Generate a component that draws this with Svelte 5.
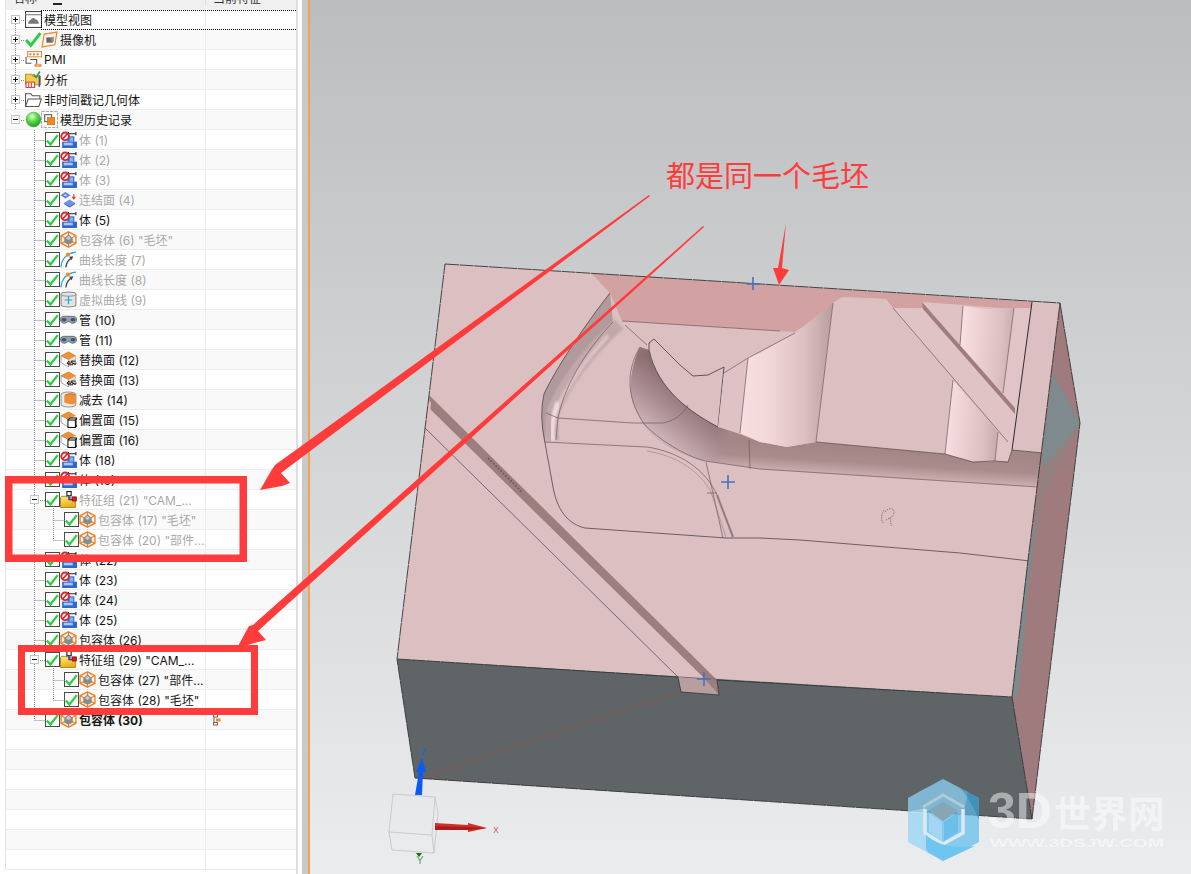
<script lang="ts">
    const body = "body";
    const wrap = "wrap";
    type Row = { icons?: string[]; text?: string; level?: number; check?: boolean; dim?: boolean; bold?: boolean; exp?: string; stamp?: boolean };

    const rows: Row[] = [
        { level: 0, exp: "+", icons: ["view"], text: "模型视图" },
        { level: 0, exp: "+", icons: ["tick", "camera"], text: "摄像机" },
        { level: 0, exp: "+", icons: ["pmi"], text: "PMI" },
        { level: 0, exp: "+", icons: ["analysis"], text: "分析" },
        { level: 0, exp: "+", icons: ["folder"], text: "非时间戳记几何体" },
        { level: 0, exp: "-", icons: ["ball", "history"], text: "模型历史记录" },
        { level: 1, check: true, dim: true, icons: [body], text: "体 (1)" },
        { level: 1, check: true, dim: true, icons: [body], text: "体 (2)" },
        { level: 1, check: true, dim: true, icons: [body], text: "体 (3)" },
        { level: 1, check: true, dim: true, icons: ["sew"], text: "连结面 (4)" },
        { level: 1, check: true, icons: [body], text: "体 (5)" },
        { level: 1, check: true, dim: true, icons: [wrap], text: '包容体 (6) "毛坯"' },
        { level: 1, check: true, dim: true, icons: ["curve"], text: "曲线长度 (7)" },
        { level: 1, check: true, dim: true, icons: ["curve"], text: "曲线长度 (8)" },
        { level: 1, check: true, dim: true, icons: ["virtual"], text: "虚拟曲线 (9)" },
        { level: 1, check: true, icons: ["tube"], text: "管 (10)" },
        { level: 1, check: true, icons: ["tube"], text: "管 (11)" },
        { level: 1, check: true, icons: ["replace"], text: "替换面 (12)" },
        { level: 1, check: true, icons: ["replace"], text: "替换面 (13)" },
        { level: 1, check: true, icons: ["subtract"], text: "减去 (14)" },
        { level: 1, check: true, icons: ["offset"], text: "偏置面 (15)" },
        { level: 1, check: true, icons: ["offset"], text: "偏置面 (16)" },
        { level: 1, check: true, icons: [body], text: "体 (18)" },
        { level: 1, check: true, icons: [body], text: "体 (19)" },
        { level: 1, exp: "-", check: true, dim: true, icons: ["group"], text: '特征组 (21) "CAM_...' },
        { level: 2, check: true, dim: true, icons: [wrap], text: '包容体 (17) "毛坯"' },
        { level: 2, check: true, dim: true, icons: [wrap], text: '包容体 (20) "部件...' },
        { level: 1, check: true, icons: [body], text: "体 (22)" },
        { level: 1, check: true, icons: [body], text: "体 (23)" },
        { level: 1, check: true, icons: [body], text: "体 (24)" },
        { level: 1, check: true, icons: [body], text: "体 (25)" },
        { level: 1, check: true, icons: [wrap], text: "包容体 (26)" },
        { level: 1, exp: "-", check: true, icons: ["group"], text: '特征组 (29) "CAM_...' },
        { level: 2, check: true, icons: [wrap], text: '包容体 (27) "部件...' },
        { level: 2, check: true, icons: [wrap], text: '包容体 (28) "毛坯"' },
        { level: 1, check: true, bold: true, icons: [wrap], text: "包容体 (30)", stamp: true },
        {}, {}, {}, {}, {}, {}, {},
    ];

    // dotted tree lines, one stub per row plus the long verticals
    const stubs = rows
        .map((row, i) => {
            const y = 20.5 + 20 * i;
            if (row.level === 0) return `M15 ${y}h4`;
            if (row.level === 2) return `M47.500 ${y}h11`;
            if (row.level === 1) return row.exp ? `M34 ${y}h5` : `M28.500 ${y}h11`;
            return "";
        })
        .join("");
    const guides = `M9.500 20v90M28.500 130v590M47.500 508v32M47.500 668v32${stubs}`;
</script>

<svg class="defs" width="0" height="0" aria-hidden="true">
    <defs>
        <symbol id="i-view" viewBox="0 0 16 16">
            <rect x="0.5" y="0.5" width="15" height="15" fill="#fff" stroke="#444" />
            <path d="M0 3.5h16" stroke="#777" />
            <path d="M3 12c0-3 2-3 3-4.500 1.500-1.500 3-1 4 .5 1.500 0 3 1.500 3 4z" fill="#777" />
        </symbol>
        <symbol id="i-tick" viewBox="0 0 16 16">
            <path d="M1 8.500l4.500 5L14.500 2" fill="none" stroke="#27cf3f" stroke-width="2.800" />
        </symbol>
        <symbol id="i-camera" viewBox="0 0 16 16">
            <path d="M3 3L15 1 13 13 1 15z" fill="#fff4ea" stroke="#ea8a35" stroke-width="1.200" />
            <rect x="5" y="6" width="6" height="5" fill="#666" />
            <path d="M9 7l3-2v5l-3-1z" fill="#888" />
        </symbol>
        <symbol id="i-pmi" viewBox="0 0 16 16">
            <rect x="2.500" y="0.500" width="13" height="5" fill="#fff" stroke="#e8872f" />
            <path d="M4 2h2v2H4zm3.500 0h2v2h-2zm3.500 0h2v2h-2z" fill="#e8872f" />
            <path d="M1 5.500v6h5M5 8h6v5" fill="none" stroke="#555" />
            <path d="M9 12h3v3H9zm3.500 0h3v3h-3z" fill="#ee9a45" />
        </symbol>
        <symbol id="i-analysis" viewBox="0 0 16 16">
            <path d="M0.500 3h6l1 2h7v8h-14z" fill="#f6cd45" stroke="#b8902c" />
            <path d="M8 3l2.500 3L14 0.500" fill="none" stroke="#2f9a3a" stroke-width="1.600" />
            <path d="M13.500 4v11" stroke="#3a54b5" stroke-width="1.400" />
            <rect x="1" y="10.500" width="8" height="5" fill="#fff" stroke="#d8433b" />
            <path d="M3.500 11v4M6 11v4" stroke="#d8433b" />
        </symbol>
        <symbol id="i-folder" viewBox="0 0 16 16">
            <path d="M0.500 14.500v-12h5l1.500 2h7v3" fill="#fff" stroke="#555" />
            <path d="M0.500 14.500L3 7.500h12.500L13 14.500z" fill="#fff" stroke="#555" />
        </symbol>
        <radialGradient id="ball" cx="0.4" cy="0.3" r="0.75">
            <stop offset="0" stop-color="#dcffd2" />
            <stop offset="0.45" stop-color="#58dc48" />
            <stop offset="1" stop-color="#179a1c" />
        </radialGradient>
        <symbol id="i-ball" viewBox="0 0 16 16">
            <circle cx="8" cy="8" r="7" fill="url(#ball)" stroke="#5e9e58" stroke-width="0.500" />
        </symbol>
        <symbol id="i-history" viewBox="0 0 16 16">
            <rect x="0.500" y="0.500" width="15" height="15" fill="#fff" stroke="#aaa" stroke-dasharray="3 1" />
            <rect x="3.500" y="3.500" width="6.500" height="6.500" fill="#fff" stroke="#555" />
            <rect x="6" y="6" width="7" height="7" fill="#ee8a20" stroke="#b9651a" stroke-width="0.500" />
        </symbol>
        <symbol id="i-body" viewBox="0 0 16 16">
            <path d="M8 2.500h7M8 1v3M15 1v3" stroke="#222" fill="none" />
            <path d="M7 5h6.500v5H7z" fill="#2f66d4" />
            <path d="M9 6h3.500v4H9z" fill="#86b4f2" />
            <path d="M2 10h14v6H2z" fill="#2f66d4" />
            <path d="M3.500 11h8.500v2.500H3.500z" fill="#a8c8f2" />
            <circle cx="4.800" cy="5" r="3.600" fill="#fff" stroke="#d9262a" stroke-width="1.800" />
            <path d="M2.500 7.500L7 2.500" stroke="#d9262a" stroke-width="1.500" />
        </symbol>
        <symbol id="i-sew" viewBox="0 0 16 16">
            <path d="M0.500 4L5 1l5 3-5 3z" fill="#5d80d8" />
            <path d="M3 4l2-1 2 1-2 1z" fill="#d8e3f8" />
            <path d="M4 11l5-3 5 3-5 3z" fill="#6f93e4" />
            <path d="M4 11v1.500l5 3 5-3V11l-5 3z" fill="#3a62bd" />
            <path d="M13 3v4M11.500 5.500L13 7.500l1.500-2" fill="none" stroke="#d8492f" stroke-width="1.100" />
        </symbol>
        <symbol id="i-wrap" viewBox="0 0 16 16">
            <path d="M8 0.800L15 4.500V11.500L8 15.200 1 11.500V4.500z" fill="#fdf1e4" stroke="#e8852a" stroke-width="1.300" />
            <path d="M1 4.500L8 8l7-3.500M8 8v7M1 11.500L8 8l7 3.500M8 1v7" fill="none" stroke="#e8852a" stroke-width="1" />
            <path d="M4 11V6.800L8 3l4 3.800V11L8 13z" fill="#8b8b8b" />
            <path d="M5.500 6.800L8 4.500l2.500 2.300L8 8.500z" fill="#c9c9c9" />
        </symbol>
        <symbol id="i-curve" viewBox="0 0 16 16">
            <path d="M0.800 15.500C1.500 8 6 2 15 1" fill="none" stroke="#2aa6d6" stroke-width="1.100" />
            <path d="M5.500 15.500C6 11 8 8 11 6.500" fill="none" stroke="#444" stroke-width="1.200" />
            <path d="M8.500 5.500l4-.5-1.500 3.800z" fill="#444" />
            <circle cx="7.500" cy="3.500" r="2" fill="#ee8a2a" />
        </symbol>
        <symbol id="i-virtual" viewBox="0 0 16 16">
            <path d="M1 3c0-2.800 14-2.800 14 0v10c0 2.800-14 2.800-14 0z" fill="#e4e4e4" stroke="#888" />
            <path d="M1 3c0 2.500 14 2.500 14 0" fill="none" stroke="#999" />
            <path d="M8 4.500v8M4.500 8.500h7" stroke="#1aa8d8" stroke-width="1.100" />
        </symbol>
        <symbol id="i-tube" viewBox="0 0 16 16">
            <path d="M0.500 8c0-3 2.500-3 4-3h7c1.500 0 4 0 4 3s-2 3.500-4 3.500c-1.500 0-2-1.500-3.500-1.500s-2 1.500-3.500 1.500c-2 0-4-.5-4-3.500z" fill="#9a9fa5" stroke="#555" stroke-width="0.700" />
            <ellipse cx="3.800" cy="8.200" rx="2.400" ry="1.700" fill="#2d5a8e" />
            <ellipse cx="12.200" cy="8.200" rx="2.400" ry="1.700" fill="#2d5a8e" />
        </symbol>
        <symbol id="i-replace" viewBox="0 0 16 16">
            <path d="M1 4.500L8 0.800l6.500 3.700L8 8z" fill="#f09030" stroke="#c8701e" stroke-width="0.500" />
            <path d="M1 4.500V11l7 4V8z" fill="#fafafa" stroke="#888" stroke-width="0.700" />
            <path d="M14.500 4.500V8L8 11V8z" fill="#f6dcc2" stroke="#999" stroke-width="0.500" />
            <path d="M7 11.500h3.500V10l3 2.500H15M15 9.500l-4.500 0M15.500 11.500h-3.500v1.500h-3.500l-2-1.500 2-2v1.500" fill="#fff" stroke="#111" stroke-width="0.900" />
        </symbol>
        <symbol id="i-subtract" viewBox="0 0 16 16">
            <path d="M1 4c0-4 14-4 14 0v8c0 4-14 4-14 0z" fill="#e9e9e9" stroke="#999" />
            <path d="M4 5c0-3 10-3.500 11-1v7c-2 2-6 2-11-.5z" fill="#ee8f3a" />
            <path d="M5 4c2-2 8-2 9 0" fill="none" stroke="#c46e22" />
        </symbol>
        <symbol id="i-offset" viewBox="0 0 16 16">
            <path d="M1 4.500L8 0.800l6.500 3.700L8 8z" fill="#f09030" stroke="#c8701e" stroke-width="0.500" />
            <path d="M1 4.500V11l7 4V8z" fill="#f8f8f8" stroke="#888" stroke-width="0.700" />
            <path d="M14.500 4.500V7L8 10V8z" fill="#f6dcc2" />
            <path d="M7.500 8.500l2-2h6.500v7l-1.500 2M14.500 8.500l1.500-2" fill="#fff" stroke="#111" />
            <rect x="7.500" y="8.500" width="7" height="7" fill="#fff" stroke="#111" />
        </symbol>
        <linearGradient id="fold" x1="0" y1="0" x2="0.300" y2="1">
            <stop offset="0" stop-color="#fff07a" />
            <stop offset="1" stop-color="#f0ae10" />
        </linearGradient>
        <symbol id="i-group" viewBox="0 0 16 16">
            <path d="M0.500 15.500V6.500l1-1.500h5l1 1h7v9.500z" fill="url(#fold)" stroke="#8a6a12" stroke-width="0.700" />
            <rect x="6.500" y="0.500" width="4" height="4" fill="#fff" stroke="#111" />
            <path d="M8.500 4.500v3.500h4" fill="none" stroke="#1a35e0" stroke-width="1.300" />
            <rect x="11.500" y="5.500" width="4" height="4" fill="#e8101a" stroke="#711" stroke-width="0.600" />
        </symbol>
    </defs>
</svg>

<div class="page">
    <aside class="panel">
        <header class="head">
            <span class="h1">名称<i class="sort"></i></span>
            <span class="h2">当前特征</span>
        </header>
        <div class="tree">
            <svg class="guides" width="291" height="864" aria-hidden="true">
                <path d={guides} fill="none" stroke="#8d8d8d" stroke-dasharray="1 1" />
            </svg>
            {#each rows as row, i}
                <div class="row" class:alt={i % 2 === 1}>
                    <div class="name lv{row.level ?? 0}" class:dim={row.dim} class:bold={row.bold} class:grouped={row.exp && row.level === 1}>
                        {#if row.exp}
                            <span class="exp">{#if row.exp === "+"}<b class="v"></b>{/if}</span>
                        {/if}
                        {#if row.check}
                            <span class="box"><svg viewBox="0 0 16 16" width="14" height="14"><use href="#i-tick" /></svg></span>
                        {/if}
                        {#each row.icons ?? [] as icon}
                            <svg class="ico" viewBox="0 0 16 16" width="17" height="17"><use href="#i-{icon}" /></svg>
                        {/each}
                        {#if row.text}<span class="label">{row.text}</span>{/if}
                    </div>
                    <div class="cur">
                        {#if row.stamp}
                            <svg viewBox="0 0 8 12" width="8" height="12"><rect x="0.500" y="0.500" width="4" height="2.500" fill="#fff" stroke="#666" /><rect x="3" y="4.500" width="4.500" height="3" fill="#ee8a20" /><rect x="0.500" y="8.500" width="4" height="2.500" fill="#fff" stroke="#666" /><path d="M1 3v6" stroke="#666" /></svg>
                        {/if}
                    </div>
                </div>
            {/each}
            <div class="focus"></div>
        </div>
    </aside>
    <div class="sash"></div>

    <main class="view">
        <svg class="model" viewBox="310 0 881 874" width="881" height="874">
            <defs>
                <linearGradient id="cyl" x1="0" y1="0" x2="1" y2="0">
                    <stop offset="0" stop-color="#f8dfe0" />
                    <stop offset="0.3" stop-color="#f3d8d9" />
                    <stop offset="0.7" stop-color="#dcbfc0" />
                    <stop offset="1" stop-color="#b99c9d" />
                </linearGradient>
                <linearGradient id="cyl2" x1="0" y1="0" x2="1" y2="0.100">
                    <stop offset="0" stop-color="#fbe2e3" />
                    <stop offset="0.35" stop-color="#efd3d4" />
                    <stop offset="0.8" stop-color="#dcbfc0" />
                    <stop offset="1" stop-color="#cbaeaf" />
                </linearGradient>
                <linearGradient id="trough" gradientUnits="userSpaceOnUse" x1="800" y1="446" x2="798" y2="478">
                    <stop offset="0" stop-color="#a58687" />
                    <stop offset="0.4" stop-color="#aa8c8d" />
                    <stop offset="1" stop-color="#dbbfc0" />
                </linearGradient>
                <linearGradient id="arc" gradientUnits="userSpaceOnUse" x1="692" y1="392" x2="648" y2="446">
                    <stop offset="0" stop-color="#8a6b6c" />
                    <stop offset="0.5" stop-color="#b0949a" />
                    <stop offset="1" stop-color="#e2c8c9" />
                </linearGradient>
                <filter id="soft"><feGaussianBlur stdDeviation="0.900" /></filter>
                <filter id="wide" x="-20%" y="-20%" width="140%" height="140%"><feGaussianBlur stdDeviation="5" /></filter>
                <clipPath id="front"><path d="M397 659L1012 697 1032 819 415 778z" /></clipPath>
                <clipPath id="troughClip"><path d="M649 350C653 378 680 405 718 427L740 434 760 442 787 447 815 442 945 454 973 462 1008 461 1012 450 1043 453 1038 487 760 469 700 460C670 450 640 435 631 395 630 375 634 360 640 347z" /></clipPath>
            </defs>

            <!-- top face and far wall -->
            <path d="M445 264L1060 303 1012 697 397 659z" fill="#dcbfc0" />
            <path d="M591 273L1032 302V309H1013L963 305 923 308 893 308 886 299 842 297 833 303 810 322 795 332 780 331 622 321 610 293z" fill="#d2a1a1" />

            <!-- pocket walls -->
            <path d="M610 293C585 325 556 368 544 394Q539 415 545 443L548 410C566 374 592 340 613 322z" fill="#b19a9b" />
            <path d="M619 324C590 350 565 382 553 412Q550 428 553 441" fill="none" stroke="#c2a8a9" stroke-width="13" filter="url(#soft)" />
            <path d="M608 336C588 357 568 385 556 410" fill="none" stroke="#dcc3c4" stroke-width="4" filter="url(#soft)" />
            <path d="M558 402Q550 425 553 441" fill="none" stroke="#f1dcdd" stroke-width="5" filter="url(#soft)" />

            <!-- trough below the blocks -->
            <path d="M649 350C653 378 680 405 718 427L740 434 760 442 787 447 815 442 945 454 973 462 1008 461 1012 450 1043 453 1038 487 760 469 700 460C670 450 640 435 631 395 630 375 634 360 640 347z" fill="url(#trough)" />
            <g clip-path="url(#troughClip)">
                <path d="M655 345L725 425 715 470 690 470 620 420 620 350z" fill="url(#arc)" filter="url(#wide)" />
            </g>

            <!-- blocks -->
            <path d="M649 343L654 339 680 365 693 376 708 375 724 367 718 427C690 412 658 390 649 350z" fill="#dcbfc0" stroke="#3f3a3b" stroke-width="0.800" />
            <path d="M724 373L748 358 740 433 718 427z" fill="#dfc2c3" />
            <path d="M748 357L760 353 795 333 833 303 816 442 787 447 760 442 740 433z" fill="url(#cyl)" />
            <path d="M833 303L842 297 886 299 893 308 953 380 945 454 816 442z" fill="#dcbfc0" />
            <path d="M963 306L987 309 1014 308 1003 393 960 345z" fill="url(#cyl2)" />
            <path d="M953 380L998 432 995 461 973 462 945 454z" fill="url(#cyl2)" />
            <path d="M1014 308H1031L1012 450 1008 462 995 461 998 432 1008 442 1015 413 1003 393z" fill="#e1c5c6" />
            <path d="M893 308L923 309 1015 414 1008 442z" fill="#e0c3c4" />
            <path d="M922 302L963 305 960 345z" fill="#dfc2c3" />
            <path d="M922 302L1015 408V414L923 309z" fill="#a07c7e" />

            <!-- slot running to the front edge -->
            <path d="M429 395L717 680 719 695 702 676 430 409z" fill="#9d7e7f" />
            <path d="M428 401L431 402 429 430 425 428z" fill="#e7b8b9" />
            <path d="M488 458L522 492" stroke="#7a5a5b" stroke-width="2" stroke-dasharray="2 1.500" />

            <!-- thin edges -->
            <path d="M717 495L733 537" stroke="#b39899" stroke-width="2.500" />
            <g fill="none" stroke="#6e5b5d" stroke-width="0.700">
                <path d="M425 428L678 677" stroke="#4b4547" />
                <path d="M622 321L780 331M625 325L647 345" />
                <path d="M613 322C590 346 566 380 558 418L556 440" />
                <path d="M546 413L558 418 633 423H663Q680 420 688 405" />
                <path d="M640 347C625 372 627 400 645 425 665 445 690 457 705 461L760 469 1038 487" />
                <path d="M545 442L647 447C680 452 706 470 717 495L733 537" />
                <path d="M647 451C678 456 700 472 711 492L726 537" stroke="#a58a8b" />
                <path d="M707 493L717 493M706 462L723 538" />
                <path d="M749 440L750 469" />
                <path d="M724 373L748 358 795 333M748 358L740 433M833 303L816 442" />
                <path d="M893 308L1008 442M953 380L945 454M998 432L995 461M963 306L960 345M1014 308L1003 393" />
                <path d="M1032 302L1012 450" stroke="#2e2b2c" stroke-width="1" />
                <path d="M816 442L945 454 973 462 995 461 1008 462 1012 450 1043 453" stroke="#4b4547" />
            </g>
            <g fill="none" stroke="#4f4548" stroke-width="0.800">
                <path d="M610 293C585 325 556 368 544 394Q539 415 545 443L553 487C558 515 572 525 585 528L726 538 760 538 800 540 960 553 1030 561" />
                <path d="M885 512c3-5 10-4 9 1s-6 5-8 7M884 510c-3 5-3 10 -1 13M890 518c1 3 0 6 2 8" stroke-dasharray="1.500 1" stroke="#7b6667" />
            </g>

            <!-- right side -->
            <path d="M1060 303L1080 423 1032 819 1012 697 1028 560z" fill="#9f7b7d" />
            <path d="M1053 373L1080 423 1043 497 1042 452z" fill="#7e8a8d" />
            <path d="M1080 423L1043 497 1037 540 1042 470z" fill="#94807f" />
            <path d="M1041 490L1028 590 1018 697 1012 697 1028 560z" fill="#7e8a8d" />

            <!-- front face -->
            <path d="M397 659L1012 697 1032 819 415 778z" fill="#5f6566" />
            <path d="M678 677L717 680 719 695 681 692z" fill="#b89e9f" />
            <path d="M702 676L717 680 719 695z" fill="#9d7e7f" />
            <g clip-path="url(#front)" fill="none" stroke="#7b5b58" stroke-width="3.500" stroke-dasharray="1.500 1.500">
                <path d="M424 777L681 692" />
                <path d="M424 778L560 790" stroke-width="2" />
            </g>

            <!-- outline -->
            <g fill="none" stroke="#343535" stroke-width="0.900" stroke-dasharray="14 0.600">
                <path d="M445 264L1060 303 1080 423 1032 819 415 778 397 659 445 264" />
                <path d="M397 659L678 677M717 680L1012 697 1032 819M1012 697L1028 560 1060 303" />
            </g>
            <path d="M678 677L681 692 719 695 717 680" fill="none" stroke="#333" stroke-width="0.800" />

            <!-- origin marks -->
            <g stroke="#4a70bb" stroke-width="1.600">
                <path d="M753 277v13M746.500 284h13M728 475v14M721 482h14M704 672v14M697 679h14" />
            </g>

            <!-- triad -->
            <g fill="none" stroke="#c9cbcc" stroke-width="1">
                <path d="M393 794L435 797 438 813 434 853 392 850 389 832z" />
                <path d="M389 832L432 835 435 797M432 835L434 853" />
            </g>
            <path d="M415 795L419 772H416L422 758 426 772H423L422 795z" fill="#0a5cf5" />
            <path d="M435 823L468 825 468 823 487 828 468 832 468 830 435 830z" fill="#d42f2a" />
            <path d="M435 826L468 827 487 828 468 830 435 830z" fill="#a81e1c" />
            <path d="M416 853h6l-3 4z" fill="#1e6a2c" />
            <text class="axis" x="423" y="755" fill="#2060e8" text-anchor="middle">z</text>
            <text class="axis" x="496" y="833" fill="#d66a70" text-anchor="middle">x</text>
            <text class="axis" x="420" y="864" fill="#55a860" text-anchor="middle">Y</text>

            <!-- watermark -->
            <g>
                <path d="M943 779L979 798V842L943 861 908 842V798z" fill="#5dbcec" opacity="0.700" />
                <path d="M943 779L968 792Q965 807 963 817L943 802 924 814 908 812V798L922 790z" fill="#fff" opacity="0.220" />
                <path d="M958 787L979 798V820C975 810 965 790 958 787z" fill="#1c7fb5" opacity="0.450" />
                <path d="M908 812L925 808V835L943 848 926 852 908 842z" fill="#fff" opacity="0.300" />
                <path d="M929 811L943 802 958 811 943 821z" fill="#86a6b5" />
                <path d="M929 813L942 822V841L929 832z" fill="#a4d6f3" />
                <path d="M958 813L944 822V841L958 832z" fill="#6cbfea" />
                <path d="M925 809V833L943 844 963 833V809" fill="none" stroke="#dbe9f1" stroke-width="3.500" />
                <path d="M923 807L943 795 964 807" fill="none" stroke="#c4d3da" stroke-width="3" opacity="0.700" />
                <path d="M926 835Q942 850 975 846L943 861 926 850z" fill="#6ec6f0" />
                <text class="wm1" x="988" y="828"><tspan class="wm-lat">3D</tspan><tspan dx="2">世界网</tspan></text>
                <text class="wm2" x="990" y="847" textLength="174" lengthAdjust="spacingAndGlyphs">WWW.3DSJW.COM</text>
            </g>
        </svg>
    </main>

    <svg class="notes" viewBox="0 0 1191 874" width="1191" height="874">
        <g fill="#ff3c3c">
            <path d="M650 196L649 195 275 465 271 471 260 490 282 486 290 483 281 473 650 196z" />
            <path d="M704 227L703 226 253 625 249 626 237 648 258 642 266 640 258 631 704 227z" />
            <path d="M786 223L782 268 789 270 779 285 773 268 778 268z" />
        </g>
        <g fill="none" stroke="#ff3c3c">
            <rect x="8.750" y="479.750" width="234.500" height="78.500" stroke-width="7.500" />
            <rect x="21.500" y="648.500" width="233" height="63" stroke-width="7" />
        </g>
        <text class="note" x="666" y="187">都是同一个毛坯</text>
    </svg>
</div>

<style>
    :global(body) {
        margin: 0;
        background: #fff;
    }
    .defs {
        position: absolute;
    }
    .page {
        position: relative;
        display: flex;
        width: 1191px;
        height: 874px;
        overflow: hidden;
        font-family: Inter, "Noto Sans CJK SC", sans-serif;
        font-size: 12px;
        color: #151515;
    }
    .panel {
        box-sizing: border-box;
        width: 298px;
        flex: none;
        padding-left: 5px;
        border-right: 2px solid #dedede;
        background: #fff;
    }
    .head {
        display: flex;
        height: 10px;
        overflow: hidden;
        align-items: flex-end;
        background: #f0f0f0;
        border-left: 1px solid #e3e3e3;
        line-height: 12px;
        color: #333;
    }
    .h1 {
        position: relative;
        width: 200px;
        flex: none;
        padding-left: 7px;
        box-sizing: border-box;
        border-right: 1px solid #dcdcdc;
        height: 12px;
        margin-bottom: 5px;
    }
    .h2 {
        padding-left: 7px;
        height: 12px;
        margin-bottom: 5px;
    }
    .sort {
        position: absolute;
        left: 47px;
        top: 10px;
        width: 9px;
        height: 2px;
        background: #222;
    }
    .tree {
        position: relative;
        border-left: 1px solid #e3e3e3;
    }
    .guides {
        position: absolute;
        left: 0;
        top: -10px;
        pointer-events: none;
    }
    .row {
        box-sizing: border-box;
        display: flex;
        height: 20px;
        border-bottom: 1px solid #ededed;
    }
    .row.alt {
        background: #f9f9f9;
    }
    .name {
        box-sizing: border-box;
        display: flex;
        align-items: center;
        width: 200px;
        flex: none;
        border-right: 1px solid #ededed;
        white-space: nowrap;
        overflow: hidden;
    }
    .lv0 {
        padding-left: 5px;
    }
    .lv1 {
        padding-left: 39px;
    }
    .lv2 {
        padding-left: 58px;
    }
    .lv1.grouped {
        padding-left: 24px;
    }
    .cur {
        flex: 1;
        display: flex;
        align-items: center;
        padding-left: 7px;
    }
    .exp {
        position: relative;
        z-index: 1;
        box-sizing: border-box;
        width: 9px;
        height: 9px;
        margin-right: 5px;
        flex: none;
        border: 1px solid #c4c4c4;
        background: #fff;
    }
    .lv1 .exp {
        margin-right: 6px;
    }
    .exp::before {
        content: "";
        position: absolute;
        left: 1px;
        top: 3px;
        width: 5px;
        height: 1px;
        background: #111;
    }
    .exp .v {
        position: absolute;
        left: 3px;
        top: 1px;
        width: 1px;
        height: 5px;
        background: #111;
    }
    .box {
        box-sizing: border-box;
        display: flex;
        width: 15px;
        height: 15px;
        flex: none;
        align-items: center;
        justify-content: center;
        border: 1px solid #4a4a4a;
        background: #fff;
    }
    .ico {
        flex: none;
    }
    .ico + .ico {
        margin-left: -1px;
    }
    .label {
        margin-left: 2px;
    }
    .dim .label {
        color: #a9a9a9;
    }
    .bold .label {
        font-weight: 700;
    }
    .focus {
        position: absolute;
        left: 35px;
        right: 0;
        top: 0;
        height: 20px;
        box-sizing: border-box;
        border: 1px dotted #111;
        border-right: 0;
    }
    .sash {
        width: 12px;
        flex: none;
        background: linear-gradient(90deg, #fff 0 4px, #c9c9c9 4px 10px, #f6a24a 10px);
    }
    .view {
        flex: 1;
        background: linear-gradient(180deg, #bbbdbf, #ebecee);
    }
    .model {
        display: block;
    }
    .notes {
        position: absolute;
        left: 0;
        top: 0;
        pointer-events: none;
    }
    .note {
        font-family: "Noto Sans CJK SC", sans-serif;
        font-size: 29px;
        font-weight: 400;
        fill: #ff3c3c;
    }
    .axis {
        font-family: "Liberation Sans", sans-serif;
        font-size: 11px;
    }
    .wm1 {
        font-family: "Liberation Sans", "Noto Sans CJK SC", sans-serif;
        font-size: 37px;
        font-weight: 700;
        fill: #fff;
        opacity: 0.48;
    }
    .wm-lat {
        font-size: 50px;
    }
    .wm2 {
        font-family: "Liberation Sans", sans-serif;
        font-size: 11.500px;
        font-weight: 700;
        fill: #fff;
        opacity: 0.5;
    }
</style>
